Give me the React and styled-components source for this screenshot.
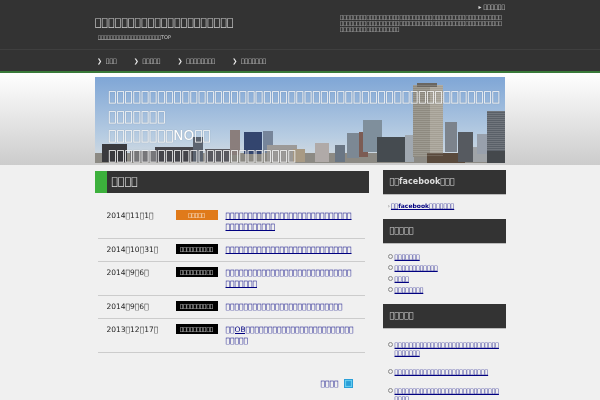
import React from "react";
import styled, { createGlobalStyle } from "styled-components";

const Z = "\u{30000}";
const t = (n) => Z.repeat(n);

const Global = createGlobalStyle`
  html, body { margin: 0; padding: 0; }
  body {
    width: 600px; height: 400px; overflow: hidden; background: #f0f0f0;
    font-family: "DejaVu Sans", sans-serif; font-size: 7.5px; color: #222;
  }
  #root { will-change: transform; }
  a { color: #000080; }
`;
const Header = styled.header`background:#333;height:71px;border-bottom:2px solid #3a7a3a;`;
const Inner = styled.div`width:410px;margin:0 auto;`;
const HeadTop = styled(Inner)`display:flex;justify-content:space-between;height:49px;`;
const Brand = styled.div`padding-top:15px;`;
const Title = styled.h1`margin:0;font-size:11px;font-weight:normal;line-height:16px;color:#ccc;`;
const Sub = styled.p`margin:2px 0 0 3px;font-size:5px;line-height:8px;color:#ccc;`;
const Info = styled.div`width:165px;display:flex;flex-direction:column;align-items:flex-end;`;
const TopLink = styled.div`margin-top:3px;font-size:6px;line-height:7px;color:#ddd;`;
const Desc = styled.p`margin:4px 0 0;font-size:5.5px;line-height:6px;color:#ccc;width:165px;`;
const NavBar = styled.nav`border-top:1px solid #3f3f3f;height:21px;`;
const NavList = styled(Inner)`display:flex;height:100%;align-items:center;padding-left:2px;box-sizing:border-box;`;
const NavItem = styled.span`font-size:6px;color:#ddd;margin-right:${(p) => p.$gap}px;&::before{content:"❯";color:#eee;margin-right:3.8px;font-size:6px;}`;
const Band = styled.div`height:92px;padding-top:4px;box-sizing:border-box;background:linear-gradient(#fff 0,#ccc 100%);`;
const Hero = styled(Inner)`position:relative;height:86px;`;
const Sky = styled.svg`position:absolute;inset:0;`;
const HeroText = styled.div`position:relative;padding:10px 0 0 13px;font-size:13.6px;line-height:19.6px;color:#fff;text-shadow:0 0 1px rgba(0,0,0,.3);`;
const Body = styled.div`width:411px;margin:5px auto 0;display:flex;justify-content:space-between;`;
const Main = styled.main`width:274px;margin-top:1px;`;
const H2 = styled.h2`margin:0;height:22px;background:#333;border-left:12px solid #3cb03c;color:#ddd;font-size:11px;font-weight:normal;line-height:22px;padding-left:5px;`;
const List = styled.div`margin:12px 4px 0 3px;`;
const Row = styled.div`display:flex;padding:5px 0 5.5px;border-bottom:1px solid #ccc;line-height:11.25px;`;
const DateCell = styled.div`width:78px;padding-left:9px;flex:none;box-sizing:border-box;`;
const Badge = styled.span`width:42px;height:10px;flex:none;background:${(p) => p.$c};color:#fff;font-size:5.5px;line-height:10px;text-align:center;`;
const LinkCell = styled.a`margin-left:8px;width:130px;`;
const More = styled.div`display:flex;justify-content:flex-end;align-items:center;gap:5px;margin:26px 16px 0 0;`;
const MoreIcon = styled.span`width:7px;height:7px;border:1px solid #2a9fd8;background:#2a9fd8;box-shadow:inset 0 0 1px 1px #6cd0f0;`;
const Side = styled.aside`width:123px;`;
const SideHead = styled.h3`margin:0;height:24px;background:#333;border-bottom:1px solid #bbb;color:#ddd;font-size:8px;font-weight:bold;line-height:24px;padding-left:7px;`;
const FbLink = styled.div`margin:7px 0 9px 5px;font-size:6px;line-height:8px;font-weight:bold;&::before{content:"›";color:#999;margin-right:1px;}`;
const SideList = styled.ul`margin:${(p) => p.$mt}px 0 ${(p) => p.$mb}px;padding:0 4px 0 7px;list-style:none;`;
const SideItem = styled.li`position:relative;padding-left:5px;font-size:6px;line-height:8px;margin-bottom:${(p) => p.$mb}px;&::before{content:"";position:absolute;left:-2px;top:1px;width:3px;height:3px;border:1px solid #888;border-radius:50%;}`;

const rows = [
  [`2014${Z}11${Z}1${Z}`, "#e07a1a", 5, t(28 + 11)],
  [`2014${Z}10${Z}31${Z}`, "#000", 10, t(28)],
  [`2014${Z}9${Z}6${Z}`, "#000", 10, t(28 + 7)],
  [`2014${Z}9${Z}6${Z}`, "#000", 10, t(26)],
  [`2013${Z}12${Z}17${Z}`, "#000", 10, t(2) + "OB" + t(24 + 5)],
];

const b = (x, y, w, h, f) => <rect key={`${x}-${y}`} x={x} y={y} width={w} height={h} fill={f} />;

export default function App() {
  return (
    <>
      <Global />
      <Header>
        <HeadTop>
          <Brand>
            <Title>{t(21)}</Title>
            <Sub>{t(21)}TOP</Sub>
          </Brand>
          <Info>
            <TopLink>▸ {t(6)}</TopLink>
            <Desc>{t(116)}</Desc>
          </Info>
        </HeadTop>
        <NavBar>
          <NavList>
            <NavItem $gap={17}>{t(3)}</NavItem>
            <NavItem $gap={17}>{t(5)}</NavItem>
            <NavItem $gap={17}>{t(8)}</NavItem>
            <NavItem $gap={0}>{t(7)}</NavItem>
          </NavList>
        </NavBar>
      </Header>
      <Band>
        <Hero>
          <Sky width="410" height="86" viewBox="0 0 410 86">
            <defs>
              <linearGradient id="sky" x1="0" y1="0" x2="0" y2="1">
                <stop offset="0" stopColor="#7fa6d6" />
                <stop offset="0.7" stopColor="#b8cde2" />
                <stop offset="1" stopColor="#d8dde0" />
              </linearGradient>
              <pattern id="win" width="3" height="2" patternUnits="userSpaceOnUse">
                <rect width="3" height="1" fill="rgba(255,255,255,.14)" />
              </pattern>
            </defs>
            <rect width="410" height="86" fill="url(#sky)" />
            {b(0, 76, 410, 10, "#8c8a84")}
            {b(7, 67, 25, 18, "#3a3a3e")}
            {b(35, 74, 25, 11, "#77777a")}
            {b(60, 70, 40, 15, "#44444a")}
            {b(98, 60, 10, 25, "#5c6470")}
            {b(110, 72, 25, 13, "#5a5a60")}
            {b(135, 53, 10, 25, "#8a7e7c")}
            {b(149, 55, 18, 22, "#33456e")}
            {b(168, 54, 10, 22, "#76859a")}
            {b(172, 68, 30, 17, "#9c9a98")}
            {b(198, 72, 12, 13, "#a89a84")}
            {b(220, 66, 14, 19, "#b0aaa8")}
            {b(240, 68, 10, 17, "#6a7684")}
            {b(252, 56, 12, 25, "#7c8894")}
            {b(264, 55, 9, 25, "#7c5c54")}
            {b(268, 43, 19, 32, "#7f8f9c")}
            {b(282, 60, 28, 25, "#454b50")}
            {b(310, 58, 9, 27, "#a0a8b0")}
            {b(318, 8, 17, 72, "#8e8a80")}
            {b(335, 8, 13, 72, "#a49f94")}
            {b(322, 6, 20, 4, "#6a6660")}
            {b(332, 76, 38, 10, "#5a4a3c")}
            {b(350, 45, 12, 30, "#7c838c")}
            {b(363, 55, 15, 30, "#565a60")}
            {b(378, 70, 14, 15, "#a0a4a8")}
            {b(382, 57, 10, 20, "#98a0ac")}
            {b(392, 34, 18, 40, "#5a6068")}
            {b(392, 74, 18, 12, "#44484c")}
            <rect x="318" y="8" width="30" height="72" fill="url(#win)" />
            <rect x="392" y="34" width="18" height="40" fill="url(#win)" />
          </Sky>
          <HeroText>
            {t(55)}<br />
            {t(8)}NO{t(2)}<br />
            {t(23)}
          </HeroText>
        </Hero>
      </Band>
      <Body>
        <Main>
          <H2>{t(4)}</H2>
          <List>
            {rows.map((r, i) => (
              <Row key={i}>
                <DateCell>{r[0]}</DateCell>
                <Badge $c={r[1]}>{t(r[2])}</Badge>
                <LinkCell href="#">{r[3]}</LinkCell>
              </Row>
            ))}
          </List>
          <More>
            <a href="#">{t(4)}</a>
            <MoreIcon />
          </More>
        </Main>
        <Side>
          <SideHead>{t(2)}facebook{t(3)}</SideHead>
          <FbLink><a href="#">{t(2)}facebook{t(7)}</a></FbLink>
          <SideHead>{t(5)}</SideHead>
          <SideList $mt={9} $mb={10}>
            <SideItem $mb={3}><a href="#">{t(7)}</a></SideItem>
            <SideItem $mb={3}><a href="#">{t(12)}</a></SideItem>
            <SideItem $mb={3}><a href="#">{t(4)}</a></SideItem>
            <SideItem $mb={3}><a href="#">{t(8)}</a></SideItem>
          </SideList>
          <SideHead>{t(5)}</SideHead>
          <SideList $mt={12} $mb={0}>
            <SideItem $mb={11}><a href="#">{t(36)}</a></SideItem>
            <SideItem $mb={11}><a href="#">{t(26)}</a></SideItem>
            <SideItem $mb={11}><a href="#">{t(33)}</a></SideItem>
          </SideList>
        </Side>
      </Body>
    </>
  );
}
